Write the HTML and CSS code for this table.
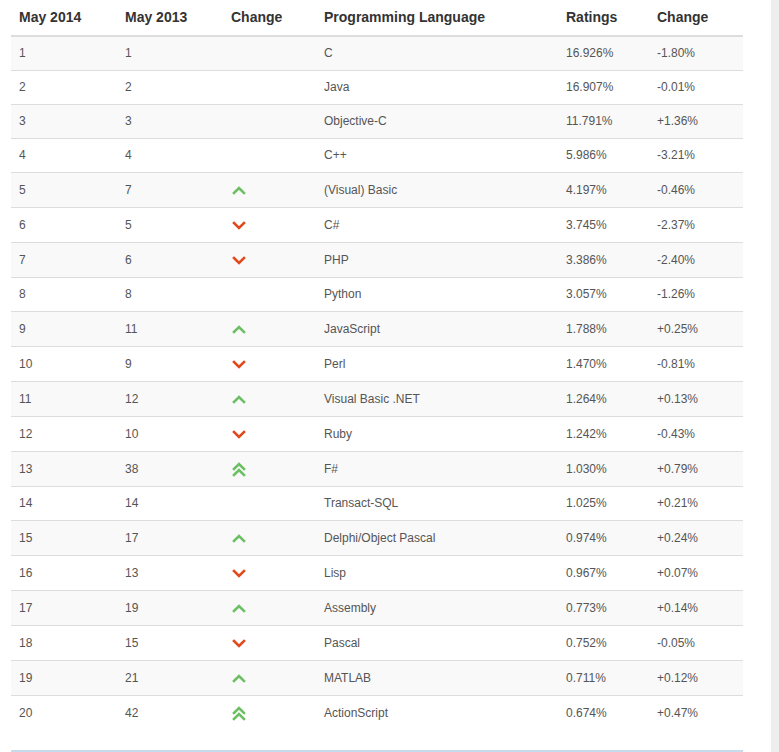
FILE: index.html
```html
<!DOCTYPE html>
<html lang="en">
<head>
<meta charset="utf-8">
<title>TIOBE Index May 2014</title>
<link rel="stylesheet" href="styles.css">
</head>
<body>
<div class="page">
  <main class="main">
    <table class="tiobe">
      <colgroup>
        <col class="c1"><col class="c2"><col class="c3"><col class="c4"><col class="c5"><col class="c6">
      </colgroup>
      <thead>
        <tr><th>May 2014</th><th>May 2013</th><th>Change</th><th>Programming Language</th><th>Ratings</th><th>Change</th></tr>
      </thead>
      <tbody>
        <tr><td>1</td><td>1</td><td></td><td>C</td><td>16.926%</td><td>-1.80%</td></tr>
        <tr><td>2</td><td>2</td><td></td><td>Java</td><td>16.907%</td><td>-0.01%</td></tr>
        <tr><td>3</td><td>3</td><td></td><td>Objective-C</td><td>11.791%</td><td>+1.36%</td></tr>
        <tr><td>4</td><td>4</td><td></td><td>C++</td><td>5.986%</td><td>-3.21%</td></tr>
        <tr><td>5</td><td>7</td><td><svg class="ico up" viewBox="0 0 16 18"><polyline points="3,12 8,7 13,12"/></svg></td><td>(Visual) Basic</td><td>4.197%</td><td>-0.46%</td></tr>
        <tr><td>6</td><td>5</td><td><svg class="ico down" viewBox="0 0 16 18"><polyline points="3,7 8,12 13,7"/></svg></td><td>C#</td><td>3.745%</td><td>-2.37%</td></tr>
        <tr><td>7</td><td>6</td><td><svg class="ico down" viewBox="0 0 16 18"><polyline points="3,7 8,12 13,7"/></svg></td><td>PHP</td><td>3.386%</td><td>-2.40%</td></tr>
        <tr><td>8</td><td>8</td><td></td><td>Python</td><td>3.057%</td><td>-1.26%</td></tr>
        <tr><td>9</td><td>11</td><td><svg class="ico up" viewBox="0 0 16 18"><polyline points="3,12 8,7 13,12"/></svg></td><td>JavaScript</td><td>1.788%</td><td>+0.25%</td></tr>
        <tr><td>10</td><td>9</td><td><svg class="ico down" viewBox="0 0 16 18"><polyline points="3,7 8,12 13,7"/></svg></td><td>Perl</td><td>1.470%</td><td>-0.81%</td></tr>
        <tr><td>11</td><td>12</td><td><svg class="ico up" viewBox="0 0 16 18"><polyline points="3,12 8,7 13,12"/></svg></td><td>Visual Basic .NET</td><td>1.264%</td><td>+0.13%</td></tr>
        <tr><td>12</td><td>10</td><td><svg class="ico down" viewBox="0 0 16 18"><polyline points="3,7 8,12 13,7"/></svg></td><td>Ruby</td><td>1.242%</td><td>-0.43%</td></tr>
        <tr><td>13</td><td>38</td><td><svg class="ico up" viewBox="0 0 16 18"><polyline points="3,9 8,4 13,9"/><polyline points="3,15 8,10 13,15"/></svg></td><td>F#</td><td>1.030%</td><td>+0.79%</td></tr>
        <tr><td>14</td><td>14</td><td></td><td>Transact-SQL</td><td>1.025%</td><td>+0.21%</td></tr>
        <tr><td>15</td><td>17</td><td><svg class="ico up" viewBox="0 0 16 18"><polyline points="3,12 8,7 13,12"/></svg></td><td>Delphi/Object Pascal</td><td>0.974%</td><td>+0.24%</td></tr>
        <tr><td>16</td><td>13</td><td><svg class="ico down" viewBox="0 0 16 18"><polyline points="3,7 8,12 13,7"/></svg></td><td>Lisp</td><td>0.967%</td><td>+0.07%</td></tr>
        <tr><td>17</td><td>19</td><td><svg class="ico up" viewBox="0 0 16 18"><polyline points="3,12 8,7 13,12"/></svg></td><td>Assembly</td><td>0.773%</td><td>+0.14%</td></tr>
        <tr><td>18</td><td>15</td><td><svg class="ico down" viewBox="0 0 16 18"><polyline points="3,7 8,12 13,7"/></svg></td><td>Pascal</td><td>0.752%</td><td>-0.05%</td></tr>
        <tr><td>19</td><td>21</td><td><svg class="ico up" viewBox="0 0 16 18"><polyline points="3,12 8,7 13,12"/></svg></td><td>MATLAB</td><td>0.711%</td><td>+0.12%</td></tr>
        <tr><td>20</td><td>42</td><td><svg class="ico up" viewBox="0 0 16 18"><polyline points="3,9 8,4 13,9"/><polyline points="3,15 8,10 13,15"/></svg></td><td>ActionScript</td><td>0.674%</td><td>+0.47%</td></tr>
      </tbody>
    </table>
    <div class="next"></div>
  </main>
  <aside class="side"></aside>
</div>
</body>
</html>
```

FILE: styles.css
```css
html, body {
  margin: 0;
  padding: 0;
  background: #ffffff;
}

body {
  font-family: "Liberation Sans", Arial, sans-serif;
  color: #555555;
}

.page {
  display: flex;
  min-height: 100vh;
}

.main {
  flex: 0 0 771px;
  box-sizing: border-box;
  padding: 0 28px 0 11px;
  background: #ffffff;
}

.side {
  flex: 1;
  background: #eeeeee;
}

.tiobe {
  width: 732px;
  table-layout: fixed;
  border-collapse: collapse;
  border-spacing: 0;
  margin: 0 0 20px 0;
}

.c1 { width: 106px; }
.c2 { width: 106px; }
.c3 { width: 93px; }
.c4 { width: 242px; }
.c5 { width: 91px; }
.c6 { width: 94px; }

.tiobe th {
  text-align: left;
  font-size: 14px;
  font-weight: bold;
  color: #333333;
  line-height: 19px;
  padding: 8px 8px 8px 8px;
  border-bottom: 2px solid #dddddd;
}

.tiobe td {
  font-size: 12px;
  line-height: 17px;
  padding: 8px;
  border-bottom: 1px solid #dddddd;
  vertical-align: middle;
  white-space: nowrap;
}

.tiobe tbody tr:nth-child(odd) td {
  background: #f9f9f9;
}

.tiobe tbody tr:last-child td {
  border-bottom: none;
}

.ico {
  width: 16px;
  height: 18px;
  vertical-align: middle;
  fill: none;
  stroke-width: 2.6;
  stroke-linecap: square;
  stroke-linejoin: miter;
}

.ico.up { stroke: #6cbf63; }
.ico.down { stroke: #e14a1c; }

.next {
  width: 732px;
  border-top: 2px solid #c6dbeb;
}
```
